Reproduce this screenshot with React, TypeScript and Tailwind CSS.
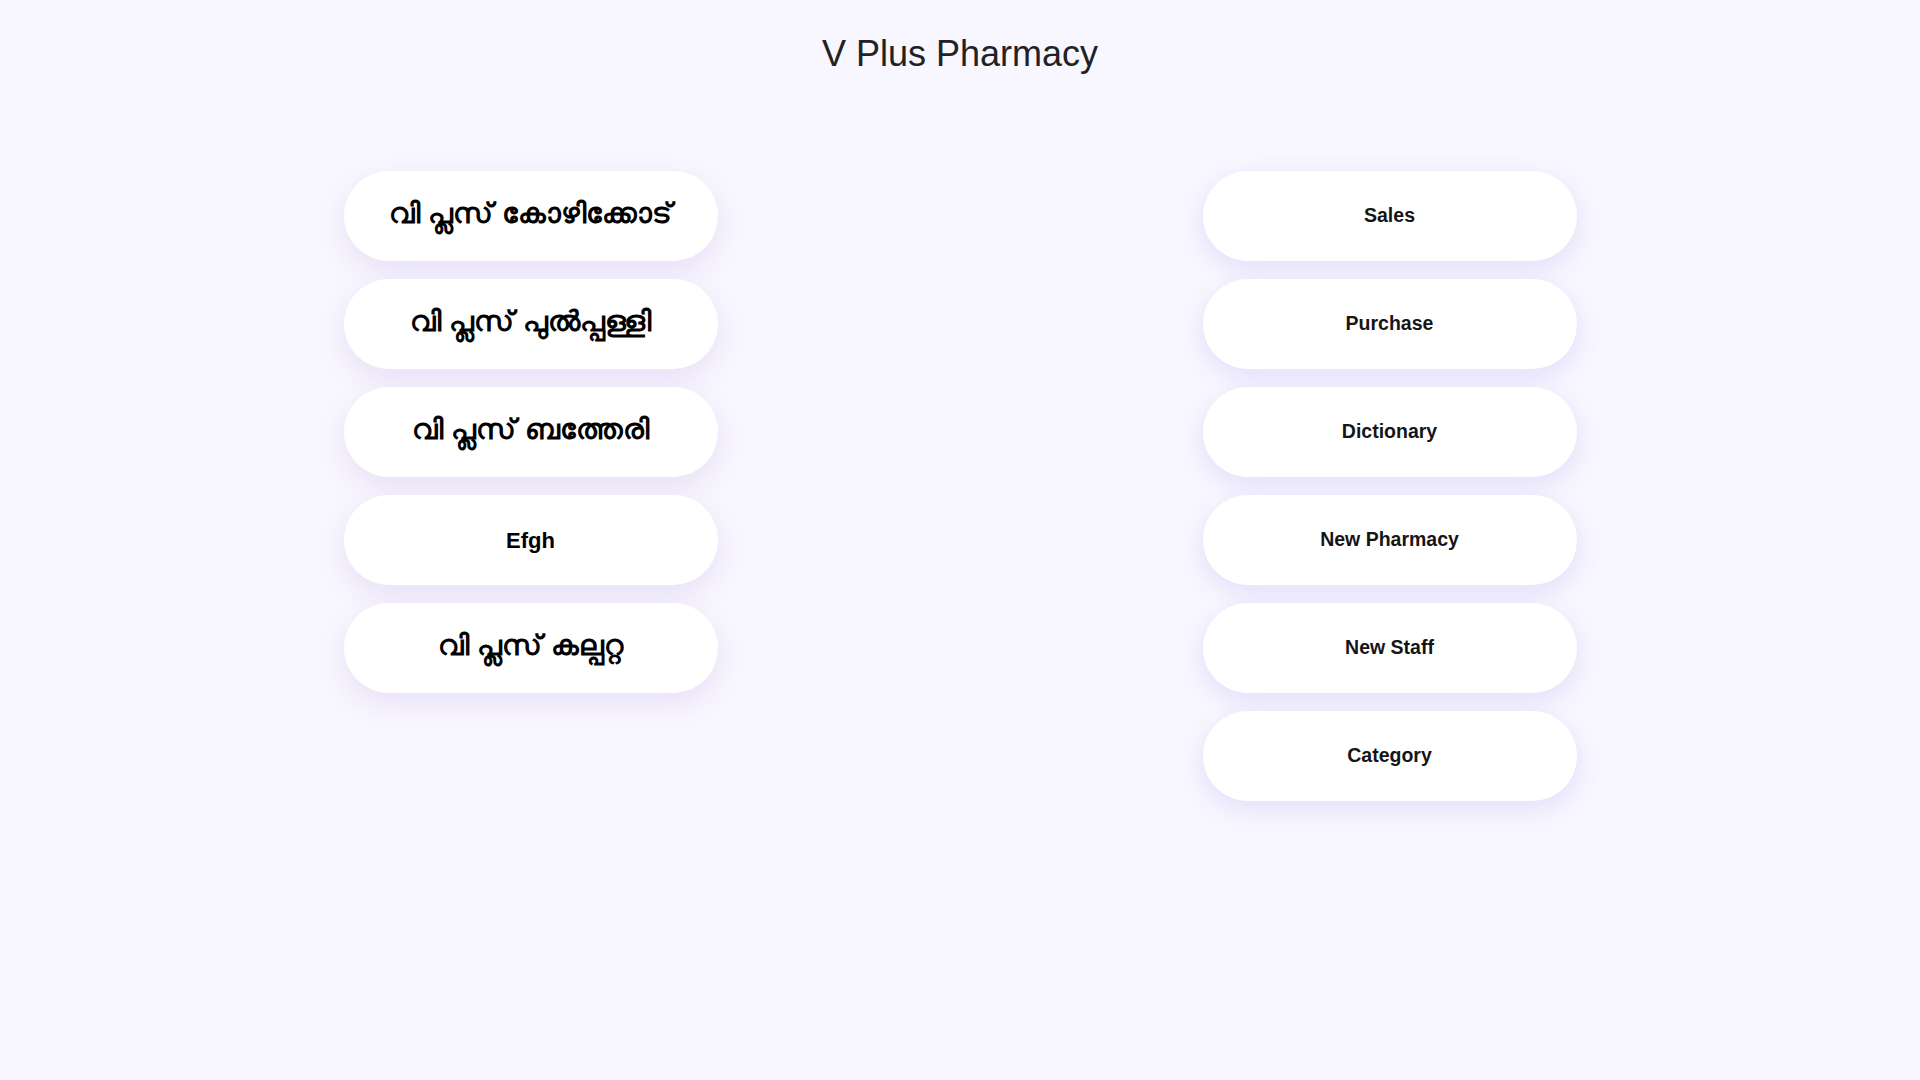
import React from "react";

const left: { t: string; ml: boolean }[] = [
  { t: "വി പ്ലസ് കോഴിക്കോട്", ml: true },
  { t: "വി പ്ലസ് പുൽപ്പള്ളി", ml: true },
  { t: "വി പ്ലസ് ബത്തേരി", ml: true },
  { t: "Efgh", ml: false },
  { t: "വി പ്ലസ് കല്പറ്റ", ml: true },
];

const right = ["Sales", "Purchase", "Dictionary", "New Pharmacy", "New Staff", "Category"];

export default function App() {
  return (
    <div className="min-h-screen w-full bg-[#f8f6fe] font-['Liberation_Sans',Arial,sans-serif]">
      <h1 className="pt-[33px] text-center text-[36px] leading-[41px] font-normal text-[#222]">
        V Plus Pharmacy
      </h1>
      <div className="mt-[97px] flex justify-center gap-[485px]">
        <div className="flex flex-col gap-[18px]">
          {left.map((item) => (
            <button
              key={item.t}
              className={
                item.ml
                  ? "flex h-[90px] w-[374px] items-center justify-center rounded-full bg-white pb-[4px] text-[29px] font-bold text-black shadow-[0_10px_28px_rgba(150,110,210,0.15)]"
                  : "flex h-[90px] w-[374px] items-center justify-center rounded-full bg-white text-[22px] font-bold text-black shadow-[0_10px_28px_rgba(150,110,210,0.15)]"
              }
            >
              {item.t}
            </button>
          ))}
        </div>
        <div className="flex flex-col gap-[18px]">
          {right.map((t) => (
            <button
              key={t}
              className="flex h-[90px] w-[374px] items-center justify-center rounded-full bg-white text-[19.5px] font-bold text-[#151515] shadow-[0_8px_24px_rgba(110,110,230,0.16)]"
            >
              {t}
            </button>
          ))}
        </div>
      </div>
    </div>
  );
}
